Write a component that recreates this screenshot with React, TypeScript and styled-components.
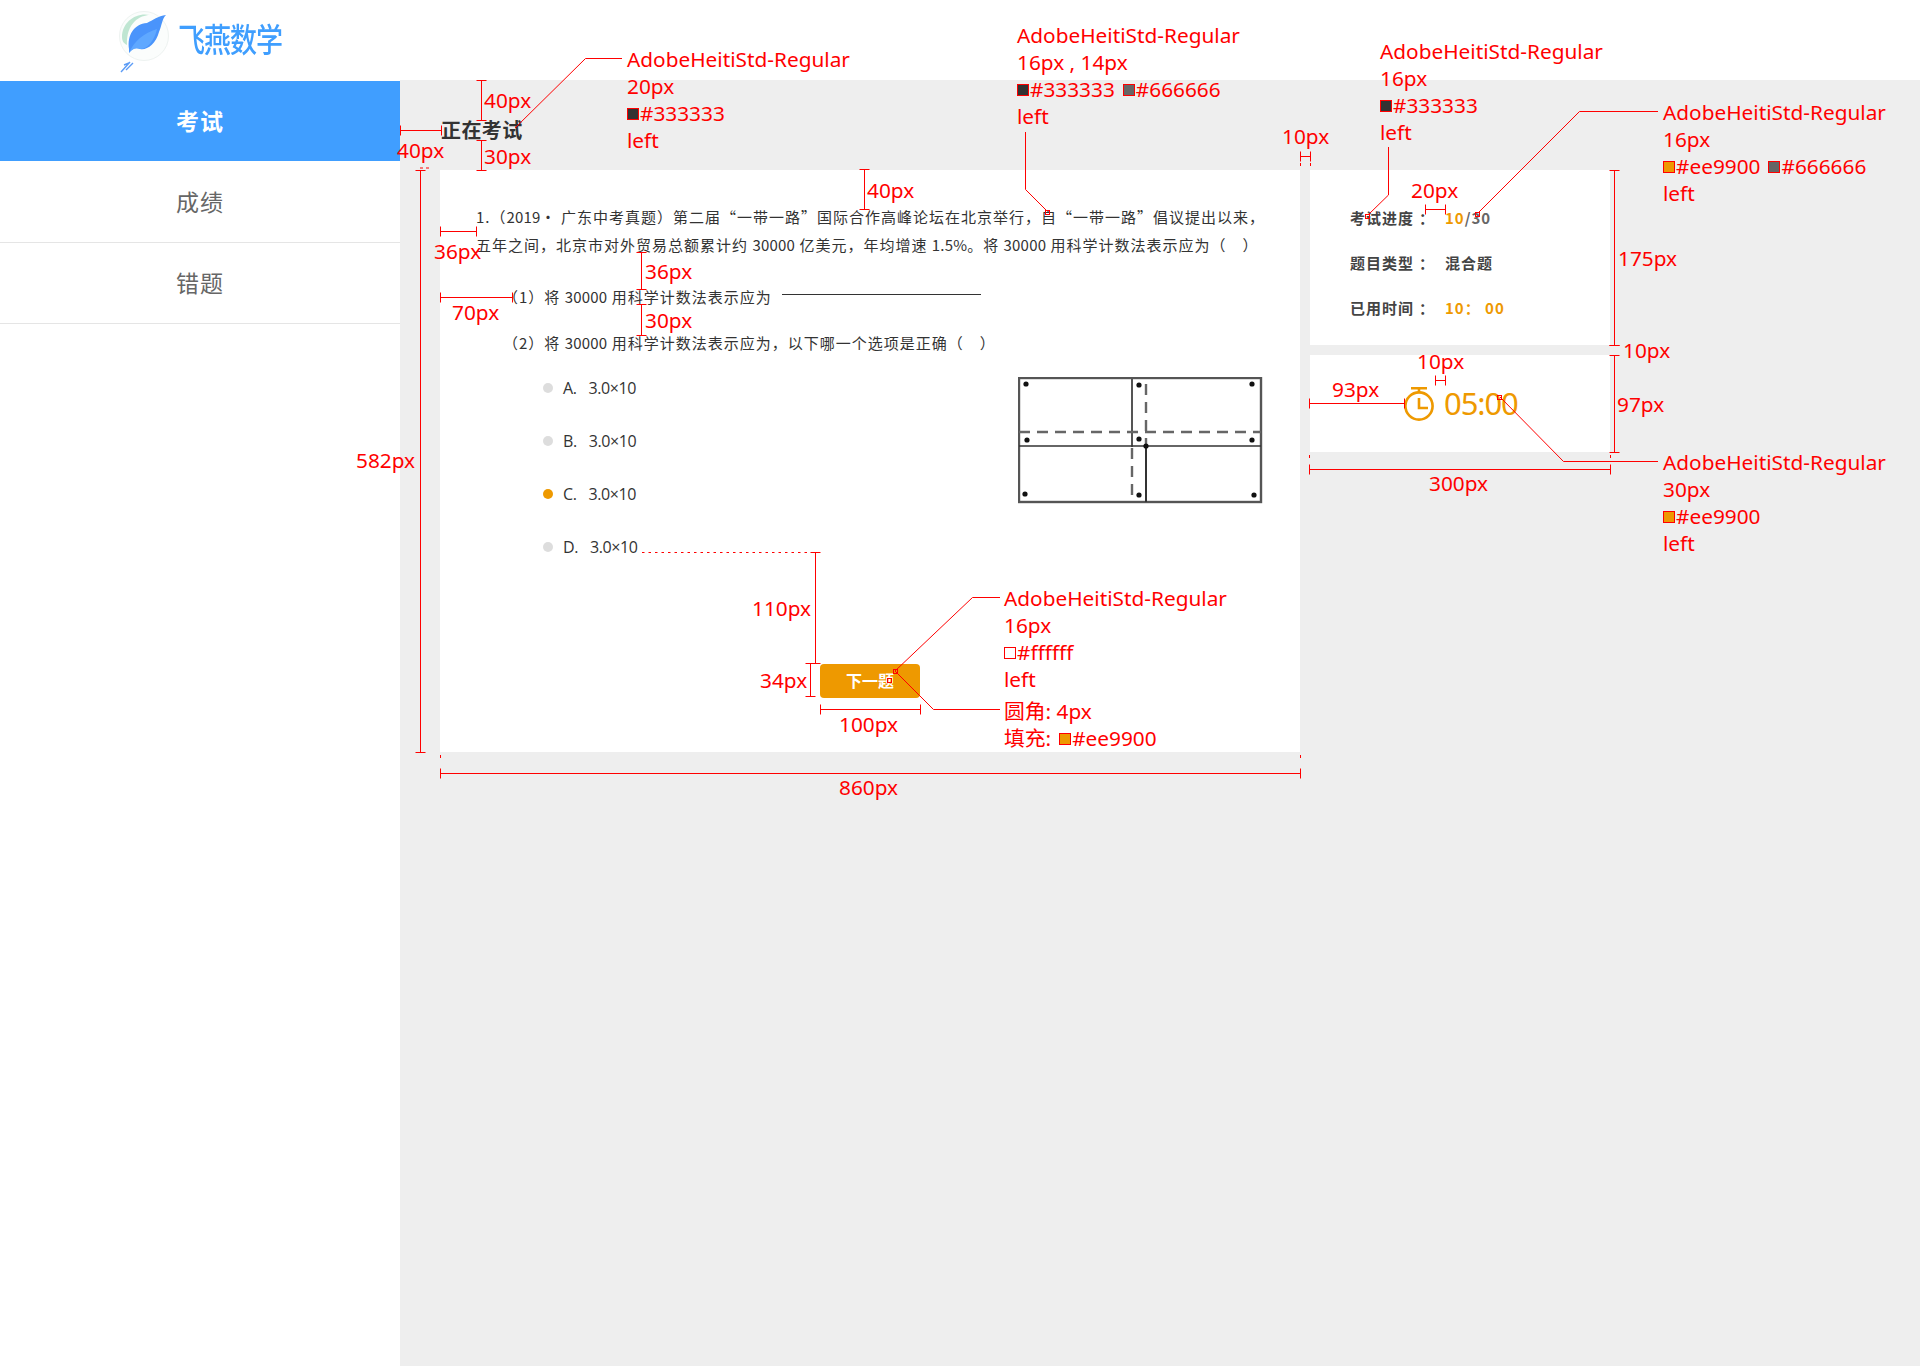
import React from 'react';
import styled, { createGlobalStyle } from 'styled-components';

const GlobalStyle = createGlobalStyle`
    html, body {
        margin: 0;
        padding: 0;
        background: #fff;
    }
    * {
        box-sizing: border-box;
    }
`;

const SANS = `"Noto Sans CJK SC", "Noto Sans", sans-serif`;
const RED = '#ff0000';
const ORANGE = '#ee9900';

const Page = styled.div`
    position: relative;
    width: 1920px;
    height: 1366px;
    overflow: hidden;
    font-family: ${SANS};
    color: #333;
`;

const Header = styled.header`
    height: 80px;
    padding-left: 116px;
    display: flex;
    align-items: center;
    gap: 4px;
    background: #fff;
`;

const LogoText = styled.span`
    margin-top: -3px;
    font-size: 27px;
    letter-spacing: -1px;
    line-height: 1;
    color: #3f9efe;
    font-weight: 500;
    transform: scaleY(1.2);
`;

const Body = styled.div`
    display: flex;
    height: 1286px;
`;

const Sidebar = styled.nav`
    width: 400px;
    flex: none;
    padding-top: 1px;
    background: #fff;
`;

const NavItem = styled.div<{ $active?: boolean }>`
    height: 81px;
    padding-bottom: 2px;
    display: flex;
    align-items: center;
    justify-content: center;
    font-size: 23px;
    letter-spacing: 1px;
    color: ${p => (p.$active ? '#fff' : '#666')};
    font-weight: ${p => (p.$active ? 700 : 400)};
    background: ${p => (p.$active ? '#409eff' : '#fff')};
    border-bottom: 1px solid ${p => (p.$active ? '#fff' : '#e5e5e5')};
`;

const Main = styled.main`
    flex: 1;
    padding: 40px 0 0 40px;
    background: #eee;
`;

const PageTitle = styled.h1`
    margin: 0 0 30px 1px;
    font-size: 20px;
    line-height: 20px;
    letter-spacing: 0.4px;
    font-weight: 700;
    color: #333;
`;

const Columns = styled.div`
    display: flex;
    align-items: flex-start;
    gap: 10px;
`;

const QuestionCard = styled.section`
    width: 860px;
    height: 582px;
    padding: 33px 36px 0;
    background: #fff;
`;

const Stem = styled.div`
    font-size: 15px;
    line-height: 28px;
    letter-spacing: 1px;
    white-space: nowrap;
    color: #333;
`;

const Num = styled.span`
    letter-spacing: 0.2px;
`;

const SubQuestion = styled.div`
    display: flex;
    align-items: center;
    margin-left: 27px;
    height: 28px;
    font-size: 15px;
    letter-spacing: 1px;
    white-space: pre;
    color: #333;
`;

const FirstSub = styled(SubQuestion)`
    margin-top: 23px;
    margin-bottom: 18px;
`;

const Blank = styled.span`
    width: 199px;
    height: 1px;
    margin: 0 0 4px 10px;
    background: #333;
`;

const OptionArea = styled.div`
    display: flex;
    justify-content: space-between;
    margin-top: 5px;
`;

const OptionList = styled.ul`
    list-style: none;
    margin: 0 0 0 67px;
    padding: 0;
`;

const Option = styled.li`
    height: 53px;
    display: flex;
    align-items: center;
    gap: 10px;
    font-family: "Open Sans", sans-serif;
    font-size: 16px;
    letter-spacing: -0.4px;
    color: #333;
`;

const Dot = styled.i<{ $selected?: boolean }>`
    width: 10px;
    height: 10px;
    border-radius: 50%;
    background: ${p => (p.$selected ? ORANGE : '#ddd')};
`;

const OptionKey = styled.span`
    margin-right: 2px;
`;

const Figure = styled.svg`
    margin: 16px 1px 0 0;
    flex: none;
    filter: blur(0.5px);
`;

const NextButton = styled.button`
    display: block;
    width: 100px;
    height: 34px;
    margin: 91px auto 0;
    padding: 0 0 2px;
    border: 0;
    border-radius: 4px;
    background: ${ORANGE};
    color: #fff;
    font-family: ${SANS};
    font-size: 16px;
    font-weight: 700;
`;

const SideColumn = styled.aside`
    width: 300px;
    display: flex;
    flex-direction: column;
    gap: 10px;
`;

const InfoPanel = styled.div`
    height: 175px;
    padding: 38px 0 0 40px;
    background: #fff;
`;

const InfoRow = styled.div`
    display: flex;
    height: 20px;
    line-height: 20px;
    margin-bottom: 25px;
    font-size: 15px;
    letter-spacing: 1px;
    font-weight: 700;
    color: #444;
`;

const InfoLabel = styled.span`
    width: 95px;
    white-space: nowrap;
`;

const Colon = styled.span`
    margin-left: 5px;
`;

const Accent = styled.span`
    color: ${ORANGE};
`;

const Muted = styled.span`
    color: #666;
`;

const TimerPanel = styled.div`
    height: 97px;
    padding-left: 94px;
    display: flex;
    align-items: center;
    gap: 10px;
    background: #fff;
`;

const TimerText = styled.span`
    font-family: "Noto Sans", sans-serif;
    font-size: 31px;
    letter-spacing: -1.1px;
    line-height: 1;
    color: ${ORANGE};
`;

/* red measuring marks drawn on top of the design */
const Marks = styled.svg`
    position: absolute;
    left: 0;
    top: 0;
    pointer-events: none;
`;

const Note = styled.div<{ $x: number; $y: number }>`
    position: absolute;
    left: ${p => p.$x}px;
    top: ${p => p.$y}px;
    font-family: "Noto Sans", "Noto Sans CJK SC", sans-serif;
    font-size: 20.8px;
    line-height: 27px;
    color: ${RED};
    white-space: nowrap;
`;

const NoteLine = styled.div<{ $gap?: boolean }>`
    display: flex;
    align-items: center;
    height: 27px;
    margin-top: ${p => (p.$gap ? 5 : 0)}px;
`;

const Swatch = styled.i<{ $color: string; $push?: boolean }>`
    width: 12px;
    height: 12px;
    margin-left: ${p => (p.$push ? 8 : 0)}px;
    margin-right: 1px;
    border: 1px solid ${RED};
    background: ${p => p.$color};
`;

const Size = styled.div<{ $x: number; $y: number }>`
    position: absolute;
    left: ${p => p.$x}px;
    top: ${p => p.$y - 15}px;
    font-family: "Noto Sans", sans-serif;
    font-size: 20.8px;
    line-height: 28px;
    color: ${RED};
    white-space: nowrap;
`;

const VDim = ({ x, y1, y2, cap = 5 }: { x: number; y1: number; y2: number; cap?: number }) => (
    <path d={`M${x} ${y1}V${y2}M${x - cap} ${y1}H${x + cap}M${x - cap} ${y2}H${x + cap}`} />
);

const HDim = ({ y, x1, x2, cap = 5 }: { y: number; x1: number; x2: number; cap?: number }) => (
    <path d={`M${x1} ${y}H${x2}M${x1} ${y - cap}V${y + cap}M${x2} ${y - cap}V${y + cap}`} />
);

const Pin = ({ x, y }: { x: number; y: number }) => <rect x={x} y={y} width={4} height={4} />;

const sizes: [string, number, number][] = [
    ['40px', 484, 101],
    ['40px', 397, 151],
    ['30px', 484, 157],
    ['36px', 434, 252],
    ['70px', 452, 313],
    ['36px', 645, 272],
    ['30px', 645, 321],
    ['40px', 867, 191],
    ['582px', 356, 461],
    ['10px', 1282, 137],
    ['20px', 1411, 191],
    ['175px', 1618, 259],
    ['10px', 1623, 351],
    ['97px', 1617, 405],
    ['93px', 1332, 390],
    ['10px', 1417, 362],
    ['300px', 1429, 484],
    ['110px', 752, 609],
    ['34px', 760, 681],
    ['100px', 839, 725],
    ['860px', 839, 788],
];

const dots: [number, number][] = [
    [8, 7], [121, 8], [234, 7],
    [9, 63], [121, 62], [234, 63],
    [7, 117], [121, 118], [236, 118],
    [128, 69],
];

const Logo = () => (
    <svg width="58" height="66" viewBox="0 0 58 66">
        <circle cx="28" cy="29" r="24.5" fill="#fbfdfc" stroke="#eef3f1" />
        <path d="M6 30C6 15 20 5 34 8 24 8 10 16 11 38 7 36 6 33 6 30Z" fill="#bfe6d2" />
        <path d="M13 42C11 28 18 17 31 16 37 13 42 9 50 8 46 12 46 18 43 25 40 37 30 44 24 42 20 40 16 42 13 46Z" fill="#4a94fb" />
        <path d="M13 46C18 34 28 26 41 22 38 36 29 43 24 42 20 40 16 42 13 46Z" fill="#5fa8ff" />
        <path d="M5 65L14 55M10 63L17 56M8 58L13 56" stroke="#5c9cf6" strokeWidth="1.4" fill="none" />
    </svg>
);

const BuildingPlan = () => (
    <Figure width="245" height="127" viewBox="0 0 245 127">
        <g fill="none" stroke="#555" strokeWidth="2">
            <rect x="1" y="1" width="242" height="124" strokeWidth="2.4" />
            <path d="M114 1V70" />
            <path d="M1 69H243" strokeWidth="1.6" stroke="#333" />
            <path d="M128 69V125" stroke="#333" />
            <path d="M1 55H243" strokeDasharray="11 7" strokeWidth="2.4" stroke="#666" />
            <path d="M128 7V69" strokeDasharray="11 7" strokeWidth="2.4" stroke="#666" />
            <path d="M114 71V125" strokeDasharray="11 7" strokeWidth="2.4" stroke="#666" />
        </g>
        <g fill="#111">
            {dots.map(([cx, cy]) => (
                <circle key={`${cx}-${cy}`} cx={cx} cy={cy} r="2.6" />
            ))}
        </g>
    </Figure>
);

const TimerIcon = () => (
    <svg width="30" height="35" viewBox="0 0 30 35" fill="none" stroke={ORANGE} strokeWidth="2.6">
        <circle cx="15" cy="20" r="13.6" />
        <path d="M7 2.2H23M15 2.2V6.5" />
        <path d="M15 12V22H24" />
    </svg>
);

const App: React.FC = () => {
    const options = [
        { key: 'A.' },
        { key: 'B.' },
        { key: 'C.', selected: true },
        { key: 'D.' },
    ];

    return (
        <Page>
            <GlobalStyle />
            <Header>
                <Logo />
                <LogoText>飞燕数学</LogoText>
            </Header>
            <Body>
                <Sidebar>
                    <NavItem $active>考试</NavItem>
                    <NavItem>成绩</NavItem>
                    <NavItem>错题</NavItem>
                </Sidebar>
                <Main>
                    <PageTitle>正在考试</PageTitle>
                    <Columns>
                        <QuestionCard>
                            <Stem>1.（<Num>2019</Num>• 广东中考真题）第二届“一带一路”国际合作高峰论坛在北京举行，自“一带一路”倡议提出以来，</Stem>
                            <Stem>五年之间，北京市对外贸易总额累计约 <Num>30000</Num> 亿美元，年均增速 <Num>1.5%</Num>。将 <Num>30000</Num> 用科学计数法表示应为（　）</Stem>
                            <FirstSub>
                                <span>（1）将 <Num>30000</Num> 用科学计数法表示应为</span>
                                <Blank />
                            </FirstSub>
                            <SubQuestion>
                                <span>（2）将 <Num>30000</Num> 用科学计数法表示应为，以下哪一个选项是正确（　）</span>
                            </SubQuestion>
                            <OptionArea>
                                <OptionList>
                                    {options.map(o => (
                                        <Option key={o.key}>
                                            <Dot $selected={o.selected} />
                                            <OptionKey>{o.key}</OptionKey>
                                            <span>3.0×10</span>
                                        </Option>
                                    ))}
                                </OptionList>
                                <BuildingPlan />
                            </OptionArea>
                            <NextButton>下一题</NextButton>
                        </QuestionCard>
                        <SideColumn>
                            <InfoPanel>
                                <InfoRow>
                                    <InfoLabel>考试进度<Colon>：</Colon></InfoLabel>
                                    <span><Accent>10</Accent><Muted>/30</Muted></span>
                                </InfoRow>
                                <InfoRow>
                                    <InfoLabel>题目类型<Colon>：</Colon></InfoLabel>
                                    <span>混合题</span>
                                </InfoRow>
                                <InfoRow>
                                    <InfoLabel>已用时间<Colon>：</Colon></InfoLabel>
                                    <Accent>10： 00</Accent>
                                </InfoRow>
                            </InfoPanel>
                            <TimerPanel>
                                <TimerIcon />
                                <TimerText>05:00</TimerText>
                            </TimerPanel>
                        </SideColumn>
                    </Columns>
                </Main>
            </Body>

            <Marks width="1920" height="1366" fill="none" stroke={RED} strokeWidth="1">
                <VDim x={481.5} y1={80.5} y2={120.5} />
                <VDim x={481.5} y1={140.5} y2={170.5} />
                <HDim y={130.5} x1={400.5} x2={441.5} />
                <VDim x={420.5} y1={170.5} y2={752.5} />
                <HDim y={231.5} x1={440.5} x2={476.5} />
                <HDim y={297.5} x1={440.5} x2={512.5} />
                <VDim x={641.5} y1={252.5} y2={289.5} />
                <VDim x={641.5} y1={304.5} y2={335.5} />
                <VDim x={864.5} y1={169.5} y2={209.5} />
                <HDim y={156.5} x1={1300.5} x2={1310.5} />
                <HDim y={209.5} x1={1425.5} x2={1445.5} />
                <HDim y={380.5} x1={1435.5} x2={1445.5} />
                <HDim y={403.5} x1={1309.5} x2={1404.5} />
                <VDim x={1614.5} y1={170.5} y2={345.5} />
                <VDim x={1614.5} y1={355.5} y2={452.5} />
                <path d="M1609.5 345.5H1619.5" />
                <HDim y={469.5} x1={1309.5} x2={1610.5} />
                <HDim y={773.5} x1={440.5} x2={1300.5} />
                <VDim x={815.5} y1={552.5} y2={663.5} />
                <VDim x={810.5} y1={663.5} y2={696.5} />
                <HDim y={709.5} x1={820.5} x2={920.5} />
                <path d="M642 552.5H810" strokeDasharray="2.5 4" />
                <path d="M1300.5 163V169M1310.5 163V169M1309.5 455V460M1610.5 455V460M420 168H432M440.5 755V760M1300.5 755V760" strokeDasharray="3 3" />

                <path d="M515 128L585.5 58.5H622" />
                <path d="M1025.5 132V189.5L1046 210" />
                <path d="M1388.5 147V195L1368 215" />
                <path d="M1478 213L1579.5 111.5H1658" />
                <path d="M1500 397L1563.5 461.5H1658" />
                <path d="M895 671L972.5 597.5H1000" />
                <path d="M895 671L933.5 709.5H1000" />
                <Pin x={1045.5} y={210.5} />
                <Pin x={1365.5} y={214.5} />
                <Pin x={1475.5} y={212.5} />
                <Pin x={1497.5} y={395.5} />
                <Pin x={893.5} y={669.5} />
                <Pin x={887.5} y={678.5} />
            </Marks>

            {sizes.map(([text, x, y]) => (
                <Size key={`${text}-${x}-${y}`} $x={x} $y={y}>{text}</Size>
            ))}

            <Note $x={627} $y={46}>
                <NoteLine>AdobeHeitiStd-Regular</NoteLine>
                <NoteLine>20px</NoteLine>
                <NoteLine><Swatch $color="#333333" />#333333</NoteLine>
                <NoteLine>left</NoteLine>
            </Note>
            <Note $x={1017} $y={22}>
                <NoteLine>AdobeHeitiStd-Regular</NoteLine>
                <NoteLine>16px , 14px</NoteLine>
                <NoteLine><Swatch $color="#333333" />#333333<Swatch $color="#666666" $push />#666666</NoteLine>
                <NoteLine>left</NoteLine>
            </Note>
            <Note $x={1380} $y={38}>
                <NoteLine>AdobeHeitiStd-Regular</NoteLine>
                <NoteLine>16px</NoteLine>
                <NoteLine><Swatch $color="#333333" />#333333</NoteLine>
                <NoteLine>left</NoteLine>
            </Note>
            <Note $x={1663} $y={99}>
                <NoteLine>AdobeHeitiStd-Regular</NoteLine>
                <NoteLine>16px</NoteLine>
                <NoteLine><Swatch $color={ORANGE} />#ee9900<Swatch $color="#666666" $push />#666666</NoteLine>
                <NoteLine>left</NoteLine>
            </Note>
            <Note $x={1663} $y={449}>
                <NoteLine>AdobeHeitiStd-Regular</NoteLine>
                <NoteLine>30px</NoteLine>
                <NoteLine><Swatch $color={ORANGE} />#ee9900</NoteLine>
                <NoteLine>left</NoteLine>
            </Note>
            <Note $x={1004} $y={585}>
                <NoteLine>AdobeHeitiStd-Regular</NoteLine>
                <NoteLine>16px</NoteLine>
                <NoteLine><Swatch $color="#ffffff" />#ffffff</NoteLine>
                <NoteLine>left</NoteLine>
                <NoteLine $gap>圆角: 4px</NoteLine>
                <NoteLine>填充: <Swatch $color={ORANGE} $push />#ee9900</NoteLine>
            </Note>
        </Page>
    );
};

export default App;
